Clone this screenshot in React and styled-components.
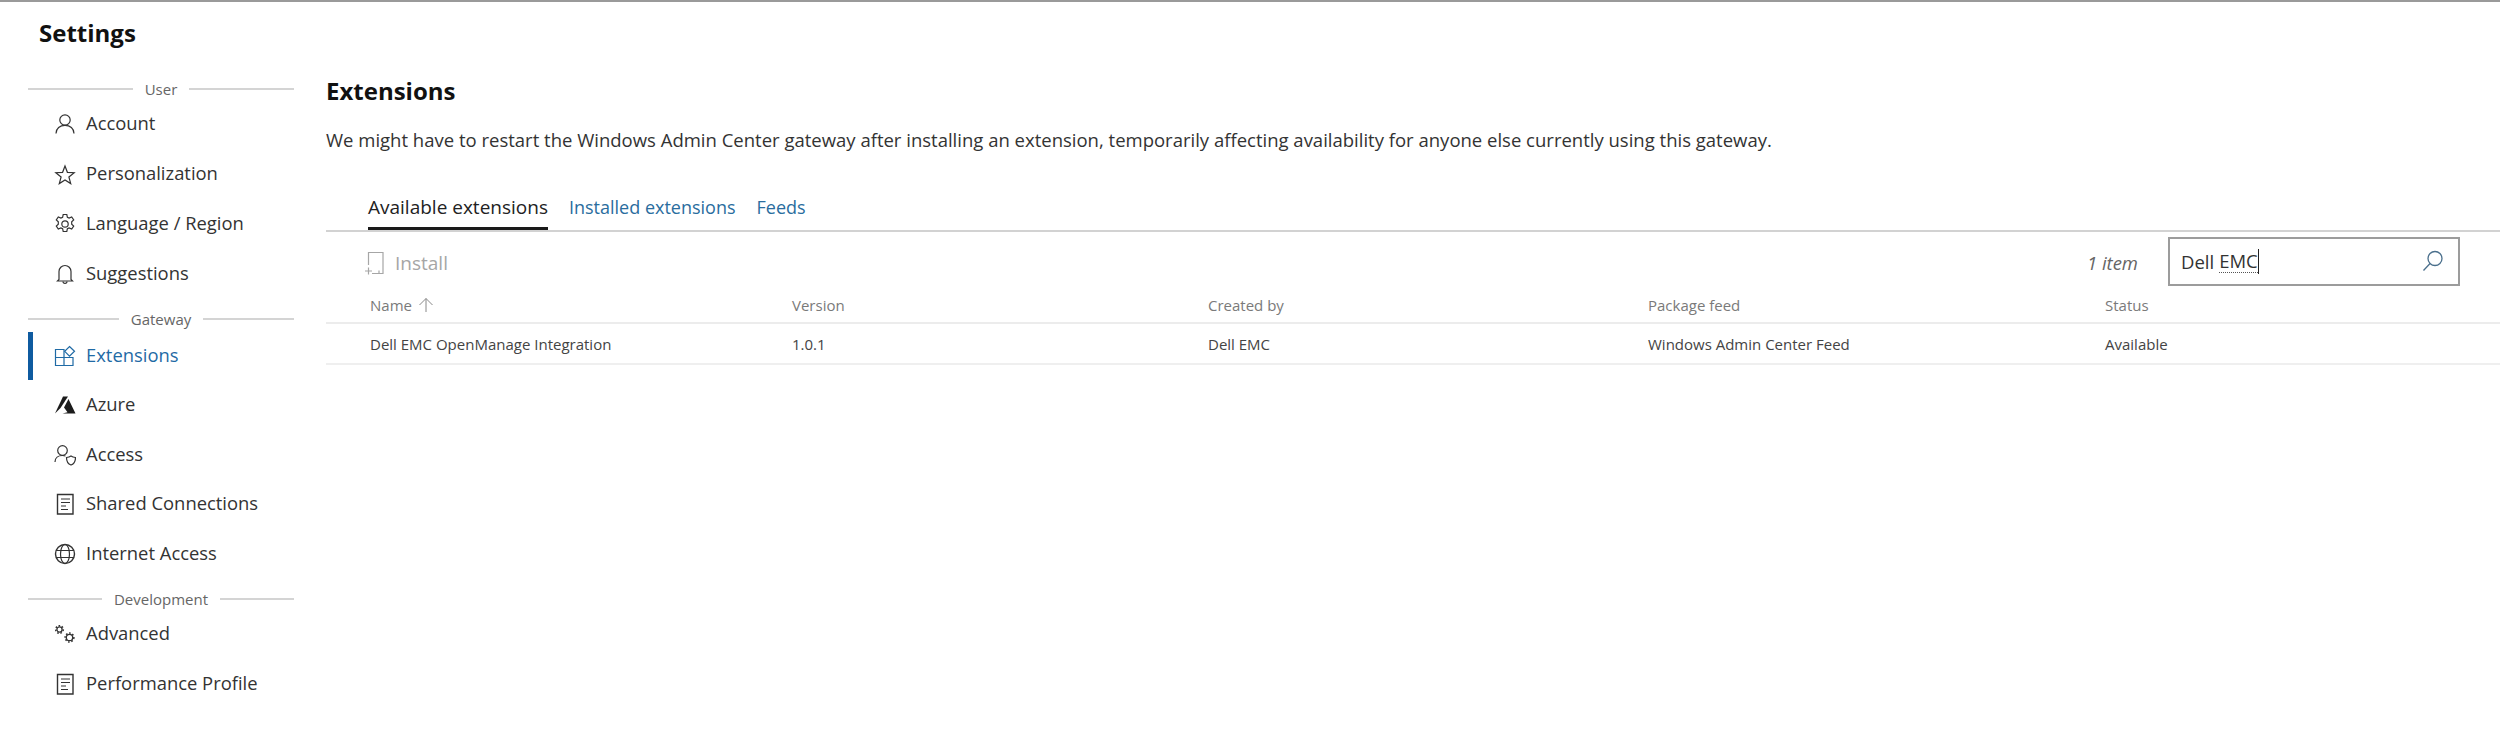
import React from 'react';
import styled, { createGlobalStyle } from 'styled-components';

const GlobalStyle = createGlobalStyle`
  html, body {
    margin: 0;
    padding: 0;
    background: #fff;
  }
  body {
    font-family: "Open Sans", "Noto Sans", sans-serif;
    color: #333;
  }
`;

const Svg = ({ children, size = 22 }) => (
  <svg width={size} height={size} viewBox="0 0 22 22" fill="none" stroke="currentColor" strokeWidth="1.2">
    {children}
  </svg>
);

const Cog = ({ x, y, r }) => (
  <>
    <circle cx={x} cy={y} r={r} strokeWidth="1.3" />
    <circle cx={x} cy={y} r={r + 1.2} strokeWidth="1.5" strokeDasharray="1.6 1.7" />
  </>
);

const icons = {
  account: (
    <Svg>
      <circle cx="11" cy="7" r="5.2" />
      <path d="M2 20.5c0-5 4-8.2 9-8.2s9 3.2 9 8.2" />
    </Svg>
  ),
  star: (
    <Svg>
      <path d="M11 3l2.4 6.3 6.8.4-5.3 4.3 1.8 6.6L11 16.900l-5.700 3.700 1.800-6.600-5.300-4.300 6.800-.4z" />
    </Svg>
  ),
  gear: (
    <Svg>
      <circle cx="11" cy="11" r="3.2" />
      <path d="M9.200 1.500h3.600l.6 2.800 1.700.8 2.600-1.200 2 3-2 1.900v2.400l2 1.900-2 3-2.600-1.200-1.700.8-.6 2.800H9.200l-.6-2.800-1.700-.8-2.600 1.200-2-3 2-1.900V8.800l-2-1.900 2-3 2.600 1.200 1.700-.8z" />
    </Svg>
  ),
  bell: (
    <Svg>
      <path d="M5 16.500V8.500a6 6 0 0 1 12 0v8l1.500 1.500h-15z" />
      <path d="M9 18.500c0 2.400 4 2.400 4 0" />
    </Svg>
  ),
  extensions: (
    <Svg>
      <path d="M1.500 4.500h8.500v8H1.500zM1.500 12.500h8.500v8H1.500zM10 12.500h9v8H10z" />
      <path d="M15.500 1.500l5 4.800-5 4.800-4.800-4.800z" />
    </Svg>
  ),
  azure: (
    <svg width="22" height="22" viewBox="0 0 22 22" fill="#1b1b1b">
      <path d="M9 2.500h5L6.500 14 1 19.500z" />
      <path d="M14.500 5l7 14.500H8.500l5-1.300-3.500-4.700z" />
    </svg>
  ),
  access: (
    <Svg>
      <circle cx="8.500" cy="6.500" r="4.800" />
      <path d="M1 18c0-4 3.200-6.500 7.500-6.500 1.200 0 2.200.2 3 .5" />
      <path d="M12.500 13.500c2-.2 3.500-.8 4.500-1.500 1 .7 2.500 1.300 4.500 1.500 0 4-1.500 6.500-4.500 7.500-3-1-4.500-3.500-4.500-7.500z" />
    </Svg>
  ),
  doc: (
    <Svg>
      <path d="M3.500 1.500h15.500v19.500H3.500z" strokeWidth="1.4" />
      <path d="M7 6h9M7 9.500h9M7 13h5M7 16.500h7" />
    </Svg>
  ),
  globe: (
    <Svg>
      <circle cx="11" cy="11" r="9.500" strokeWidth="1.4" />
      <ellipse cx="11" cy="11" rx="4.500" ry="9.500" />
      <path d="M2 7.500h18M2 14.500h18" />
    </Svg>
  ),
  advanced: (
    <Svg>
      <Cog x={5.5} y={6.5} r={2.6} />
      <Cog x={15.5} y={14.5} r={3.2} />
    </Svg>
  ),
};

const sections = [
  {
    label: 'User',
    offset: 0,
    rowHeight: 50,
    items: [
      { name: 'Account', icon: 'account' },
      { name: 'Personalization', icon: 'star' },
      { name: 'Language / Region', icon: 'gear' },
      { name: 'Suggestions', icon: 'bell' },
    ],
  },
  {
    label: 'Gateway',
    offset: 2,
    rowHeight: 49.5,
    items: [
      { name: 'Extensions', icon: 'extensions', active: true },
      { name: 'Azure', icon: 'azure' },
      { name: 'Access', icon: 'access' },
      { name: 'Shared Connections', icon: 'doc' },
      { name: 'Internet Access', icon: 'globe' },
    ],
  },
  {
    label: 'Development',
    offset: 0,
    rowHeight: 50,
    items: [
      { name: 'Advanced', icon: 'advanced' },
      { name: 'Performance Profile', icon: 'doc' },
    ],
  },
];

const columns = [
  { title: 'Name', value: 'Dell EMC OpenManage Integration', width: '466px', sort: true },
  { title: 'Version', value: '1.0.1', width: '416px' },
  { title: 'Created by', value: 'Dell EMC', width: '440px' },
  { title: 'Package feed', value: 'Windows Admin Center Feed', width: '457px' },
  { title: 'Status', value: 'Available', width: '395px' },
];

const App = () => {
  return (
    <Page>
      <GlobalStyle />
      <PageTitle>Settings</PageTitle>
      <Body>
        <Sidebar>
          {sections.map((section) => (
            <div key={section.label}>
              <SectionLabel $offset={section.offset}>{section.label}</SectionLabel>
              {section.items.map((item) => (
                <NavItem key={item.name} $active={item.active} $height={section.rowHeight}>
                  <NavIcon>{icons[item.icon]}</NavIcon>
                  {item.name}
                </NavItem>
              ))}
            </div>
          ))}
        </Sidebar>
        <Main>
          <Heading>Extensions</Heading>
          <Description>
            We might have to restart the Windows Admin Center gateway after installing an extension, temporarily
            affecting availability for anyone else currently using this gateway.
          </Description>
          <Tabs>
            <Tab $active>Available extensions</Tab>
            <Tab>Installed extensions</Tab>
            <Tab>Feeds</Tab>
          </Tabs>
          <Toolbar>
            <InstallButton>
              <svg width="22" height="24" viewBox="0 0 22 24" fill="none" stroke="#a6a6a6" strokeWidth="1.2">
                <path d="M4.500 14V1.500h14.500v21H8M1 20h7M4.500 16.500v7M15 22.500v-3" />
              </svg>
              Install
            </InstallButton>
            <ItemCount>1 item</ItemCount>
            <SearchBox>
              <SearchText>
                Dell <Squiggle>EMC</Squiggle>
                <Caret />
              </SearchText>
              <svg width="22" height="22" viewBox="0 0 22 22" fill="none" stroke="#4a6f8c" strokeWidth="1.3">
                <circle cx="13" cy="8.5" r="7" />
                <path d="M8 13.500L1.500 20.500" />
              </svg>
            </SearchBox>
          </Toolbar>
          <HeaderRow>
            {columns.map((col) => (
              <Cell key={col.title} $width={col.width} $first={col.sort}>
                {col.title}
                {col.sort && (
                  <svg width="16" height="16" viewBox="0 0 16 16" fill="none" stroke="#888" strokeWidth="1">
                    <path d="M8 15V1.500M1.500 8L8 1.500 14.500 8" />
                  </svg>
                )}
              </Cell>
            ))}
          </HeaderRow>
          <DataRow>
            {columns.map((col) => (
              <Cell key={col.title} $width={col.width} $first={col.sort}>
                {col.value}
              </Cell>
            ))}
          </DataRow>
        </Main>
      </Body>
    </Page>
  );
};

const Page = styled.div`
  width: 2500px;
  height: 729px;
  overflow: hidden;
  border-top: 2px solid #9a9a9a;
  box-sizing: border-box;
  background: #fff;
`;

const PageTitle = styled.h1`
  margin: 0;
  padding: 14px 0 0 39px;
  height: 49px;
  box-sizing: border-box;
  font-size: 24px;
  line-height: 33px;
  font-weight: 700;
  color: #111;
`;

const Body = styled.div`
  display: flex;
  padding-left: 28px;
`;

const Sidebar = styled.nav`
  width: 266px;
  flex: none;
  margin-right: 32px;
  padding-top: 28px;
`;

const SectionLabel = styled.div`
  display: flex;
  align-items: center;
  gap: 12px;
  height: 20px;
  margin-bottom: ${(p) => p.$offset}px;
  font-size: 15px;
  color: #666;
  div + div > & {
    margin-top: 10px;
  }
  &::before,
  &::after {
    content: '';
    flex: 1;
    height: 2px;
    background: #d4d4d4;
  }
`;

const NavItem = styled.div`
  position: relative;
  display: flex;
  align-items: center;
  height: ${(p) => p.$height}px;
  box-sizing: border-box;
  padding: 0 0 3px 26px;
  font-size: 18.4px;
  color: ${(p) => (p.$active ? '#1f6aa5' : '#333')};
  ${(p) =>
    p.$active &&
    `&::before {
      content: '';
      position: absolute;
      left: 0;
      top: 1px;
      width: 5px;
      height: 48px;
      background: #0f5ba0;
    }`}
`;

const NavIcon = styled.span`
  display: flex;
  width: 22px;
  margin: 3px 10px 0 0;
`;

const Main = styled.main`
  flex: 1;
  min-width: 0;
  padding-top: 23px;
`;

const Heading = styled.h2`
  margin: 0;
  font-size: 24px;
  line-height: 33px;
  font-weight: 700;
  color: #111;
`;

const Description = styled.p`
  margin: 20px 0 0;
  font-size: 18.5px;
  line-height: 26px;
  white-space: nowrap;
  color: #333;
`;

const Tabs = styled.div`
  display: flex;
  gap: 21px;
  margin-top: 39px;
  padding-left: 42px;
  border-bottom: 2px solid #d2d2d2;
  height: 40px;
  box-sizing: border-box;
`;

const Tab = styled.div`
  height: 38px;
  box-sizing: border-box;
  line-height: 30px;
  font-size: ${(p) => (p.$active ? '19px' : '18px')};
  font-weight: ${(p) => (p.$active ? 500 : 400)};
  color: ${(p) => (p.$active ? '#222' : '#2a6d9e')};
  border-bottom: 3px solid ${(p) => (p.$active ? '#1a1a1a' : 'transparent')};
`;

const Toolbar = styled.div`
  display: flex;
  align-items: center;
  height: 59px;
  padding: 0 40px 0 38px;
`;

const InstallButton = styled.div`
  display: flex;
  align-items: center;
  gap: 9px;
  padding-top: 3px;
  font-size: 19px;
  color: #a6a6a6;
`;

const ItemCount = styled.span`
  margin-left: auto;
  margin-right: 30px;
  padding-top: 2px;
  font-size: 18.5px;
  font-style: italic;
  color: #666;
`;

const SearchBox = styled.div`
  display: flex;
  align-items: center;
  justify-content: space-between;
  width: 292px;
  height: 49px;
  box-sizing: border-box;
  padding: 0 14px 2px 11px;
  border: 2px solid #9c9c9c;
`;

const SearchText = styled.span`
  display: flex;
  align-items: center;
  gap: 5px;
  padding-top: 1px;
  font-size: 18.5px;
  color: #333;
`;

const Squiggle = styled.span`
  border-bottom: 1px dotted #555;
  line-height: 22px;
`;

const Caret = styled.i`
  width: 1px;
  height: 25px;
  margin-left: -5px;
  background: #222;
`;

const HeaderRow = styled.div`
  display: flex;
  height: 33px;
  box-sizing: border-box;
  padding-bottom: 4px;
  align-items: center;
  border-bottom: 2px solid #ececec;
  font-size: 15px;
  color: #7a7a7a;
`;

const DataRow = styled.div`
  display: flex;
  height: 41px;
  box-sizing: border-box;
  align-items: center;
  border-bottom: 2px solid #efefef;
  font-size: 15px;
  color: #444;
`;

const Cell = styled.div`
  display: flex;
  align-items: center;
  gap: 6px;
  flex: 0 0 ${(p) => p.$width};
  box-sizing: border-box;
  padding-left: ${(p) => (p.$first ? '44px' : '0')};
  white-space: nowrap;
`;

export default App;
